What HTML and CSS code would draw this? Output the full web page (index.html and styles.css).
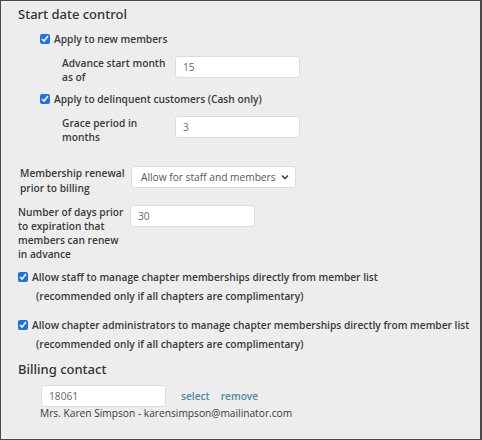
FILE: index.html
```html
<!DOCTYPE html>
<html>
<head>
<meta charset="utf-8">
<link rel="stylesheet" href="styles.css">
</head>
<body>
<div class="panel">
  <h2 class="heading">Start date control</h2>

  <div class="check-row lvl1 mt8">
    <input type="checkbox" class="cb" checked>
    <span class="check-label">Apply to new members</span>
  </div>
  <div class="field-row lvl2 mt10">
    <span class="field-label w-a">Advance start month as of</span>
    <input class="text-input w-124" type="text" value="15">
  </div>

  <div class="check-row lvl1 mt8">
    <input type="checkbox" class="cb" checked>
    <span class="check-label">Apply to delinquent customers (Cash only)</span>
  </div>
  <div class="field-row lvl2 mt10">
    <span class="field-label w-a">Grace period in months</span>
    <input class="text-input w-124" type="text" value="3">
  </div>

  <div class="field-row lvl0b mt22">
    <span class="field-label lh15 w-b">Membership renewal prior to billing</span>
    <div class="select-box">
      <span>Allow for staff and members</span>
      <svg class="chev" width="8" height="6" viewBox="0 0 8 6"><path d="M1 1.5 L4 4.5 L7 1.5" fill="none" stroke="#444" stroke-width="1.6"/></svg>
    </div>
  </div>

  <div class="field-row mt9">
    <span class="field-label w-c">Number of days prior to expiration that members can renew in advance</span>
    <input class="text-input w-124" type="text" value="30">
  </div>

  <div class="check-row lvl0 mt9">
    <input type="checkbox" class="cb" checked>
    <span class="check-label">Allow staff to manage chapter memberships directly from member list</span>
  </div>
  <p class="note">(recommended only if all chapters are complimentary)</p>

  <div class="check-row lvl0 mt15">
    <input type="checkbox" class="cb" checked>
    <span class="check-label">Allow chapter administrators to manage chapter memberships directly from member list</span>
  </div>
  <p class="note">(recommended only if all chapters are complimentary)</p>

  <h2 class="heading mt8">Billing contact</h2>
  <div class="contact-row">
    <input class="text-input w-124" type="text" value="18061">
    <a class="link" href="#">select</a>
    <a class="link" href="#">remove</a>
  </div>
  <div class="contact-info">Mrs. Karen Simpson - karensimpson@mailinator.com</div>
</div>
</body>
</html>
```

FILE: styles.css
```css
html, body {
  margin: 0;
  padding: 0;
}
body {
  background: #ededed;
  font-family: "Open Sans", "Noto Sans", sans-serif;
  color: #3a3a3a;
}
.panel {
  width: 482px;
  height: 440px;
  box-sizing: border-box;
  border: 1px solid #4a4a4a;
  border-right-width: 2px;
  background: #ededed;
  padding: 0 0 0 17px;
}
.heading {
  margin: 3px 0 0 0;
  font-family: "Noto Sans", "Open Sans", sans-serif;
  font-weight: 500;
  font-size: 13px;
  line-height: 20px;
  color: #333;
}
.mt8 { margin-top: 8px; }
.mt9 { margin-top: 9px; }
.mt10 { margin-top: 10px; }
.mt15 { margin-top: 15px; }
.mt22 { margin-top: 22px; }
.lvl0 { margin-left: -1px; }
.lvl0b { margin-left: 2px; }
.lvl1 { margin-left: 21px; }
.lvl2 { margin-left: 44px; }

.check-row {
  display: flex;
  align-items: center;
  height: 14px;
  font-size: 10.2px;
  font-weight: 600;
}
.cb {
  width: 10px;
  height: 10px;
  margin: 0 4px 0 1px;
  accent-color: #1a73e8;
}
.check-label {
  white-space: nowrap;
}
.field-row {
  display: flex;
  align-items: flex-start;
}
.field-label {
  font-size: 10.2px;
  font-weight: 600;
  line-height: 14px;
}
.lh15 { line-height: 15px; }
.w-a { width: 105px; margin-right: 8px; }
.w-b { width: 105px; margin-right: 6px; }
.w-c { width: 106px; margin-right: 6px; }
.text-input {
  box-sizing: border-box;
  height: 22px;
  border: 1px solid #dcdcdc;
  border-radius: 3px;
  background: #fff;
  padding: 0 7px;
  font-family: "Open Sans", sans-serif;
  font-size: 10.2px;
  color: #666;
  outline: none;
}
.w-124 { width: 125px; }
.select-box {
  box-sizing: border-box;
  width: 165px;
  height: 22px;
  border: 1px solid #dcdcdc;
  border-radius: 3px;
  background: #fff;
  display: flex;
  align-items: center;
  justify-content: space-between;
  padding: 0 6px 0 9px;
  font-size: 10.2px;
  color: #555;
  white-space: nowrap;
}
.chev { display: block; }
.note {
  margin: 5px 0 0 18px;
  font-size: 10.2px;
  font-weight: 600;
  line-height: 14px;
}
.contact-row {
  display: flex;
  align-items: center;
  margin: 6px 0 0 23px;
}
.link {
  font-size: 10.2px;
  font-weight: 600;
  color: #4d8aa6;
  text-decoration: none;
  margin-left: 15px;
}
.link + .link { margin-left: 11px; }
.contact-info {
  margin: -1px 0 0 22px;
  font-size: 10.2px;
  line-height: 14px;
  color: #3a3a3a;
}
```
